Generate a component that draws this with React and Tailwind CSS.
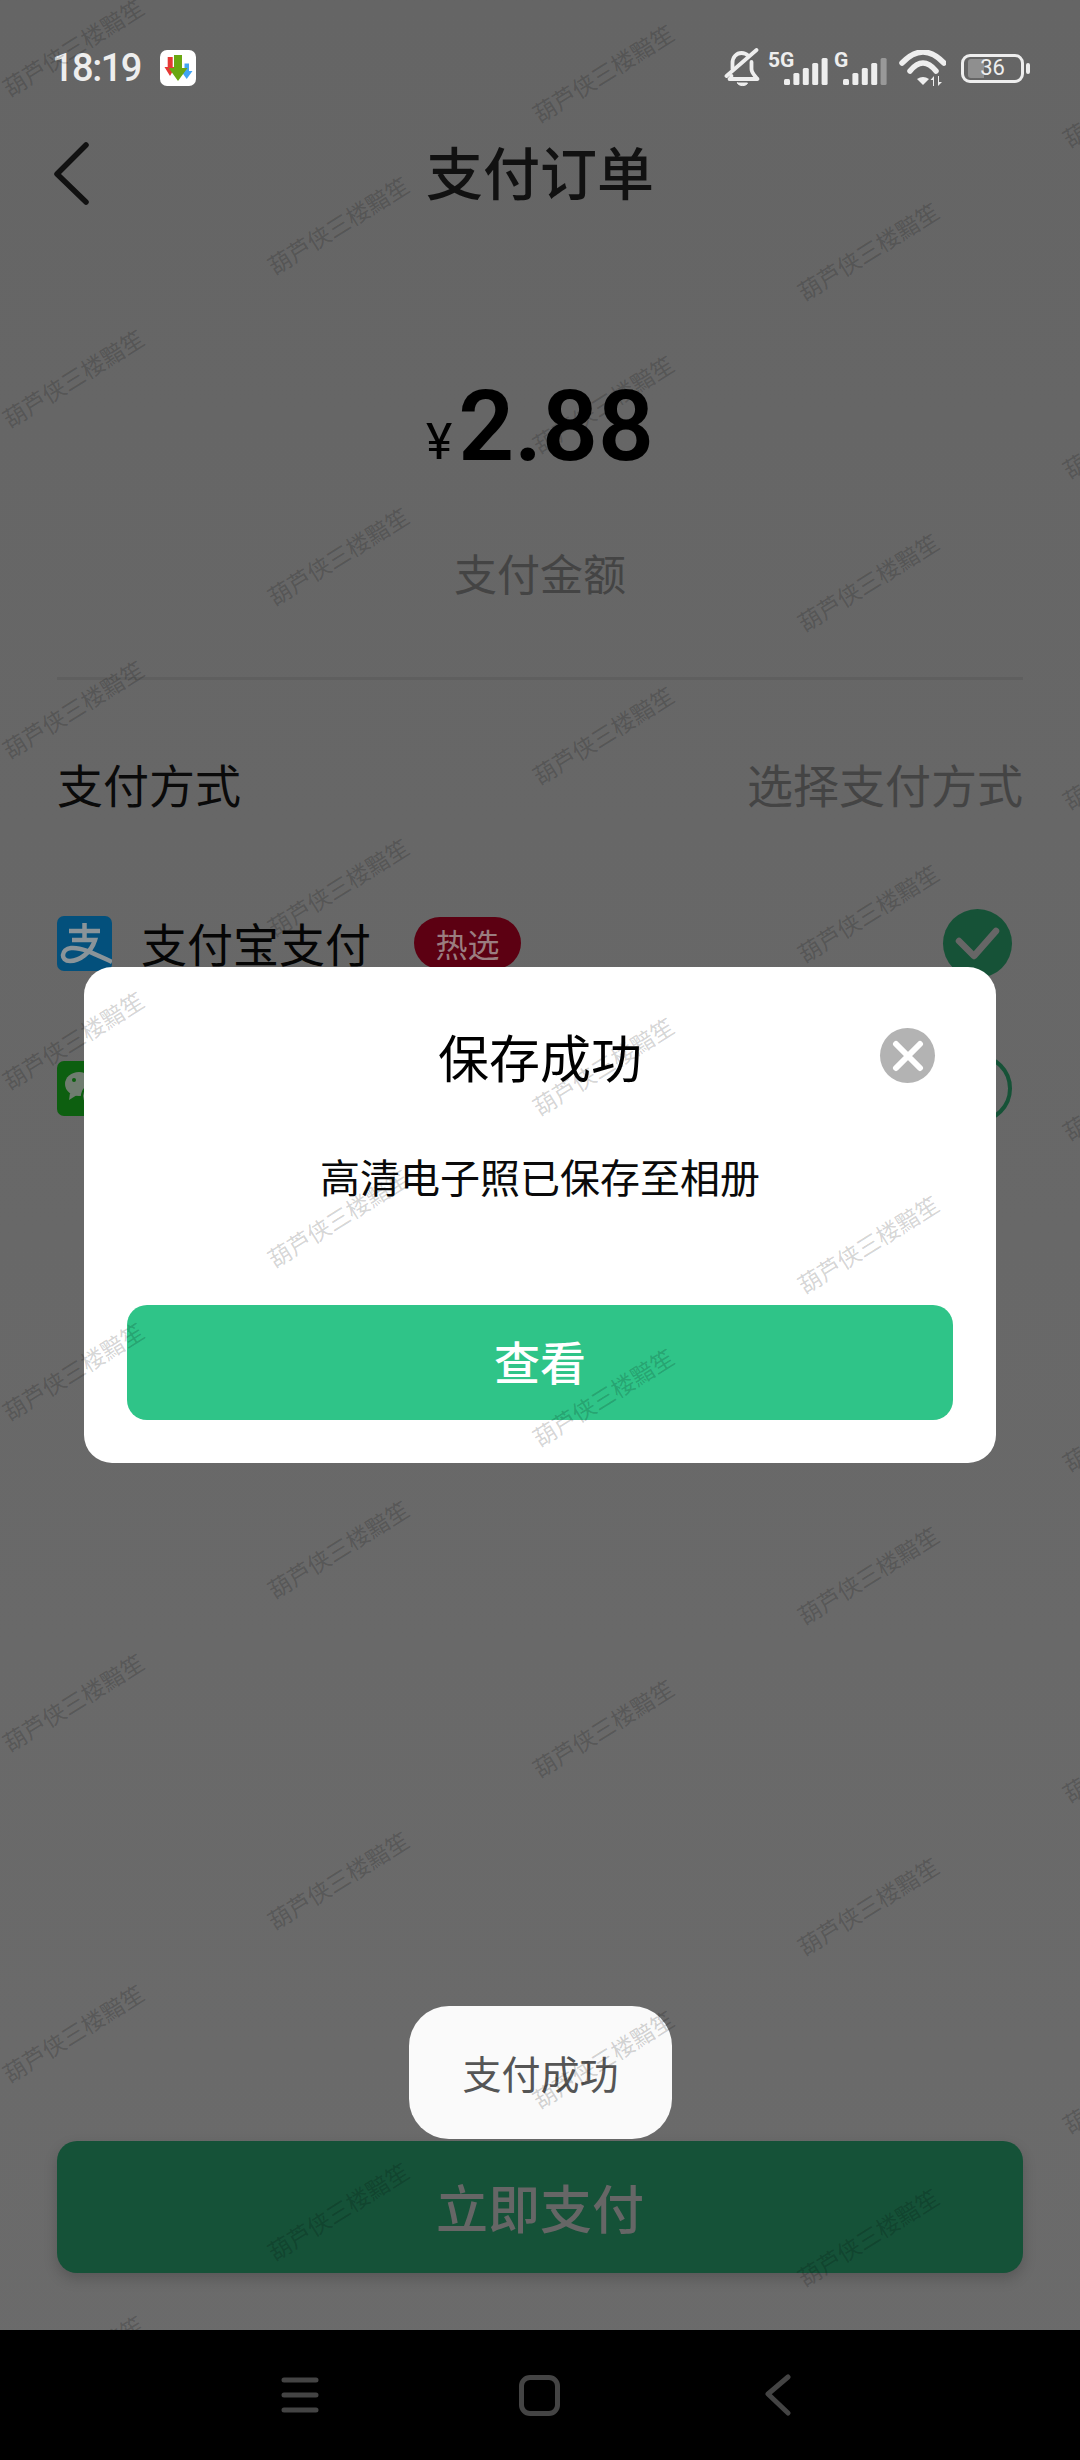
const cjk = "font-['Noto_Sans_CJK_SC','Roboto',sans-serif]";

// watermark tile, repeats over the whole screen
const columns = [
  { x: 73, y: 47 },
  { x: 338, y: 225 },
  { x: 603, y: 73 },
  { x: 868, y: 251 },
  { x: 1133, y: 98 },
];
const rows = [0, 1, 2, 3, 4, 5, 6, 7];

function Watermarks() {
  return (
    <div className="absolute inset-x-0 top-0 z-30 h-[2330px] pointer-events-none overflow-hidden">
      {columns.map((col) =>
        rows
          .filter((row) => col.y + row * 331 < 2380)
          .map((row) => (
            <span
              key={col.x + '-' + row}
              className={`absolute whitespace-nowrap text-[23px] leading-none text-black/[0.18] ${cjk}`}
              style={{
                left: col.x,
                top: col.y + row * 331,
                transform: 'translate(-50%, -50%) rotate(-32deg)',
              }}
            >
              葫芦侠三楼黯笙
            </span>
          ))
      )}
    </div>
  );
}

function AppIcon() {
  return (
    <svg width="36" height="36" viewBox="0 0 36 36" className="ml-[19px]">
      <rect width="36" height="36" rx="7" fill="#ffffff" />
      <path d="M7.7 7h5v10h2.5L10 26 4.5 17h3.2z" fill="#e53935" />
      <path d="M24.5 13.5h4.500v7.500h3.500L26.700 29 21 21h3.500z" fill="#42a5f5" />
      <path d="M14 5h8v13h5.500L18 31 8.700 18H14z" fill="#6aa812" />
    </svg>
  );
}

function MutedBell() {
  return (
    <svg width="40" height="40" viewBox="0 0 39 40" fill="none" stroke="#eeeeee" strokeWidth="3.800" strokeLinecap="round" strokeLinejoin="round">
      <path d="M10 21v-6c0-6 4-10 9-10 3 0 5 1 7 3" />
      <path d="M29 14v7c0 4 3 6 6 10H7c1-1 2-2 2-3" />
      <path d="M4 28 34 2" />
      <path d="M15 35h10c-1 3.500-9 3.500-10 0z" fill="#eeeeee" strokeWidth="1" />
    </svg>
  );
}

function Signal({ label, width, lastColor }) {
  const bars = [6, 12, 17, 22, 27];
  return (
    <div className={`relative h-[33px] ${width}`}>
      <span className="absolute left-0 top-[-2px] text-[21px] leading-[21px] font-bold text-[#eeeeee] font-['Roboto',sans-serif]">
        {label}
      </span>
      <svg width="44" height="27" viewBox="0 0 44 27" className="absolute right-0 bottom-0">
        {bars.map((h, i) => (
          <rect
            key={h}
            x={i * 9.4}
            y={27 - h}
            width="6"
            height={h}
            rx="1.500"
            fill={i === 4 && lastColor ? lastColor : '#eeeeee'}
          />
        ))}
      </svg>
    </div>
  );
}

function Wifi() {
  return (
    <svg width="47" height="36" viewBox="0 0 47 36" fill="none" stroke="#eeeeee" strokeWidth="5.500" strokeLinecap="round">
      <path d="M3 13Q24-9 45 13" />
      <path d="M11 21Q24 5 37 21" />
      <path d="M18 29Q24 25 30 29L24 35z" fill="#eeeeee" stroke="none" />
      <path d="M34 36v-6h-2.500l3.500-4v10zM40 26v6h3l-4 4V26z" fill="#eeeeee" stroke="none" />
    </svg>
  );
}

function Battery() {
  return (
    <div className="flex items-center">
      <div className="relative flex h-[29px] w-[63px] items-center justify-center rounded-[9px] border-[3px] border-[#eeeeee]">
        <div className="absolute left-[4px] top-[2px] h-[19px] w-[16px] rounded-l-[3px] bg-[#8f8f8f]" />
        <span className="relative text-[22px] leading-none text-[#eeeeee] font-['Roboto',sans-serif]">36</span>
      </div>
      <div className="ml-[2px] h-[11px] w-[4px] rounded-[2px] bg-[#eeeeee]" />
    </div>
  );
}

function StatusBar() {
  return (
    <div className="flex h-[118px] items-start justify-between pl-[52px] pr-[50px] pt-[49px]">
      <div className="flex h-[38px] items-center">
        <span className="text-[38px] leading-none font-medium text-[#eeeeee] font-['Roboto',sans-serif] tracking-[-1.500px]">18:19</span>
        <AppIcon />
      </div>
      <div className="flex h-[38px] items-center">
        <MutedBell />
        <div className="ml-[6px]"><Signal label="5G" width="w-[60px]" /></div>
        <div className="ml-[6px]"><Signal label="G" width="w-[53px]" lastColor="#999999" /></div>
        <div className="ml-[12px]"><Wifi /></div>
        <div className="ml-[15px]"><Battery /></div>
      </div>
    </div>
  );
}

function AlipayLogo() {
  return (
    <svg width="55" height="55" viewBox="0 0 55 55" fill="none" className="shrink-0">
      <rect width="55" height="55" rx="7" fill="#03507c" />
      <g stroke="#8a9499" strokeWidth="4.500">
        <path d="M12 15H43M27.500 7V23" />
        <path d="M15 24H38C34 37 22 45 13 45C3 45 4 33 14 32C25 31 38 38 55 46" />
      </g>
    </svg>
  );
}

function WechatLogo() {
  return (
    <svg width="55" height="55" viewBox="0 0 55 55" className="shrink-0">
      <rect width="55" height="55" rx="7" fill="#0d5f10" />
      <ellipse cx="22" cy="23" rx="14" ry="12" fill="#6f7c6f" />
      <path d="M13 32 12 39 20 34z" fill="#6f7c6f" />
      <circle cx="17" cy="19" r="2" fill="#0d5f10" />
      <circle cx="36" cy="35" r="11" fill="#6f7c6f" stroke="#0d5f10" strokeWidth="2" />
    </svg>
  );
}

function Page() {
  return (
    <div className="flex h-full flex-col">
      <StatusBar />

      <div className="grid h-[112px] grid-cols-[1fr_auto_1fr] items-center">
        <svg width="40" height="66" viewBox="0 0 40 66" fill="none" stroke="#111111" strokeWidth="5.500" strokeLinecap="round" strokeLinejoin="round" className="ml-[52px]">
          <path d="M34 4 5 33 34 61" />
        </svg>
        <h1 className="mb-[8px] text-[57px] leading-[60px] font-medium text-[#111111]">支付订单</h1>
      </div>

      <div className="mt-[148px] flex h-[98px] items-center justify-center text-black font-['Roboto',sans-serif]">
        <span className="mt-[30px] mr-[6px] text-[50px] leading-none">¥</span>
        <span className="text-[98px] leading-none font-semibold">2.88</span>
      </div>
      <p className="mt-[66px] h-[60px] text-center text-[43px] leading-[60px] text-[#444444]">支付金额</p>

      <div className="mx-[57px] mt-[75px] h-[3px] bg-[#5f5f5f]" />

      <div className="mt-[73px] flex h-[60px] items-center justify-between px-[57px]">
        <span className="text-[46px] leading-none text-[#0a0a0a]">支付方式</span>
        <span className="text-[46px] leading-none text-[#444444]">选择支付方式</span>
      </div>

      <div className="mt-[95px] flex h-[70px] items-center pl-[57px] pr-[68px]">
        <AlipayLogo />
        <span className="ml-[29px] mb-[3px] text-[46px] leading-none text-[#050505]">支付宝支付</span>
        <span className="ml-[43px] flex h-[52px] w-[107px] items-center justify-center rounded-full bg-[#5c0012] text-[32px] leading-none text-[#9a7d80]">
          热选
        </span>
        <span className="ml-auto flex h-[69px] w-[69px] items-center justify-center rounded-full bg-[#165237]">
          <svg width="69" height="69" viewBox="0 0 69 69" fill="none" stroke="#666666" strokeWidth="6.500" strokeLinecap="round" strokeLinejoin="round">
            <path d="M16 32 31 47 53 22" />
          </svg>
        </span>
      </div>

      <div className="mt-[75px] flex h-[70px] items-center pl-[57px] pr-[68px]">
        <WechatLogo />
        <span className="ml-auto h-[69px] w-[69px] rounded-full border-[4px] border-[#165237]" />
      </div>

      <div className="mx-[57px] mb-[57px] mt-auto flex h-[132px] items-center justify-center rounded-[20px] bg-[#155238] shadow-[0_6px_14px_rgba(0,0,0,0.18)]">
        <span className="text-[52px] leading-none font-medium text-[#666666]">立即支付</span>
      </div>

      <div className="grid h-[130px] shrink-0 grid-cols-[180px_240px_240px_240px_180px] items-center bg-black">
        <svg width="38" height="36" viewBox="0 0 38 36" fill="none" stroke="#444444" strokeWidth="5" strokeLinecap="round" className="col-start-2 justify-self-center">
          <path d="M3 3H35M3 18H35M3 33H35" />
        </svg>
        <div className="mr-[2px] h-[41px] w-[41px] justify-self-center rounded-[11px] border-[5px] border-[#444444]" />
        <svg width="28" height="42" viewBox="0 0 28 42" fill="none" stroke="#444444" strokeWidth="5" strokeLinecap="round" strokeLinejoin="round" className="mr-[5px] justify-self-center">
          <path d="M24 3 4 20 24 39" />
        </svg>
      </div>
    </div>
  );
}

function SaveDialog() {
  return (
    <div className="absolute left-[84px] top-[967px] z-10 flex h-[496px] w-[912px] flex-col rounded-[28px] bg-white">
      <div className="mt-[59px] grid h-[60px] grid-cols-[1fr_auto_1fr] items-center">
        <h2 className="col-start-2 text-[51px] leading-none text-black">保存成功</h2>
        <button className="mr-[61px] mb-[1px] flex h-[55px] w-[55px] items-center justify-center justify-self-end rounded-full bg-[#b3b3b3]">
          <svg width="32" height="32" viewBox="0 0 32 32" fill="none" stroke="#ffffff" strokeWidth="6" strokeLinecap="round">
            <path d="M4 4 28 28M28 4 4 28" />
          </svg>
        </button>
      </div>
      <p className="mt-[65px] h-[50px] text-center text-[40px] leading-[50px] text-[#0a0a0a]">高清电子照已保存至相册</p>
      <button className="mx-[43px] mt-[104px] flex h-[115px] items-center justify-center rounded-[20px] bg-[#2fc488] pb-[6px] text-[46px] leading-none font-medium text-white">
        查看
      </button>
    </div>
  );
}

function Toast() {
  return (
    <div className="absolute left-[409px] top-[2006px] z-20 flex h-[133px] w-[263px] items-center justify-center rounded-[40px] bg-[#fafafa] text-[39px] leading-none text-[#555555]">
      支付成功
    </div>
  );
}

export default function App() {
  return (
    <div className={`relative h-[2460px] w-[1080px] overflow-hidden bg-gradient-to-b from-[#656565] to-[#6b6b6b] ${cjk}`}>
      <Page />
      <SaveDialog />
      <Toast />
      <Watermarks />
    </div>
  );
}
